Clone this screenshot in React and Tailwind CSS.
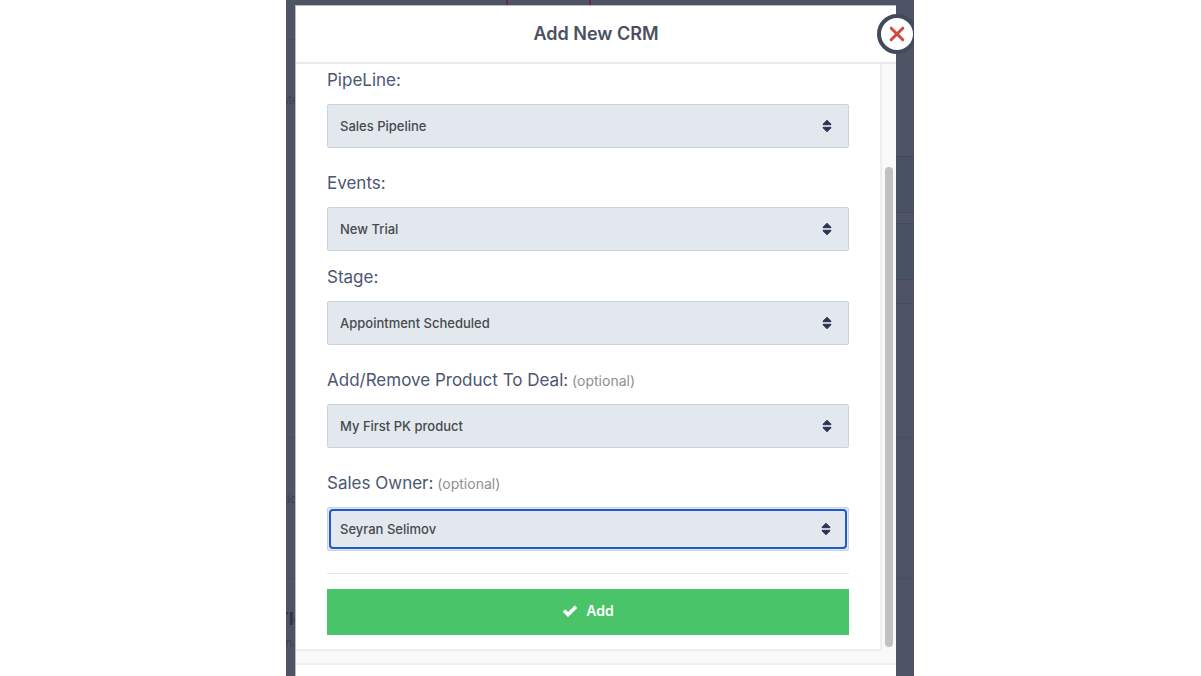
import clsx from "clsx";

const fields = [
  { id: "pipeline", label: "PipeLine:", value: "Sales Pipeline", spacing: "" },
  { id: "events", label: "Events:", value: "New Trial", spacing: "mt-[23px]" },
  { id: "stage", label: "Stage:", value: "Appointment Scheduled", spacing: "mt-[14px]" },
  {
    id: "product",
    label: "Add/Remove Product To Deal:",
    value: "My First PK product",
    optional: true,
    spacing: "mt-[23px]",
  },
  {
    id: "owner",
    label: "Sales Owner:",
    value: "Seyran Selimov",
    optional: true,
    focused: true,
    spacing: "mt-[23px]",
  },
];

const SortIcon = () => (
  <svg
    viewBox="0 0 10 14"
    className="pointer-events-none -ml-[26px] h-[14px] w-[10px] shrink-0"
    fill="#2b3556"
    stroke="#2b3556"
    strokeWidth="1"
    strokeLinejoin="round"
    aria-hidden="true"
  >
    <path d="M5 1.3 9 5.2V5.7H1V5.2Z" />
    <path d="M5 12.7 9 8.8V8.3H1V8.8Z" />
  </svg>
);

const SelectField = ({ id, label, value, optional, focused, spacing }) => (
  <div className={spacing}>
    <label htmlFor={id} className="block h-6 text-[17px] leading-6 text-[#4b5672]">
      {label}
      {optional && <span className="text-sm leading-none text-[#8f8f8f]"> (optional)</span>}
    </label>
    <div
      className={clsx(
        "mt-3 flex h-11 items-center rounded-xs border border-[#c9d3dd] bg-[#e3e8ef]",
        focused && "p-px"
      )}
    >
      <select
        id={id}
        defaultValue={value}
        className={clsx(
          "h-full w-full appearance-none bg-transparent pt-0.5 text-[13px] font-medium text-[#464a4d] outline-none",
          focused ? "rounded-sm border-2 border-[#1f5cc9] px-[9px]" : "px-3"
        )}
      >
        <option>{value}</option>
      </select>
      <SortIcon />
    </div>
  </div>
);

// Dimmed page that shows on the left of the dialog
const LeftEdge = () => (
  <div
    className="flex w-[9px] shrink-0 flex-col items-center overflow-hidden bg-[#4e5465] text-xs text-[#3a4254]"
    aria-hidden="true"
  >
    <div className="h-10 w-full border-b border-[#474e5f]" />
    <div className="flex h-[398px] w-full justify-center border-b border-[#474e5f] pt-[52px]">ste</div>
    <div className="flex h-[141px] w-full justify-center border-b border-[#474e5f] pt-[53px]">tic</div>
    <div className="pt-7 text-lg font-bold leading-6 text-[#2b3448]">Tle</div>
    <div className="pt-1">n.</div>
  </div>
);

// Dimmed page that shows on the right of the dialog
const RightEdge = () => (
  <div className="flex w-[18px] shrink-0 flex-col bg-[#4e5465]" aria-hidden="true">
    <div className="h-[156px]" />
    <div className="h-[57px] border-y border-[#414a5b] bg-[#495263]" />
    <div className="h-[10px]" />
    <div className="h-[57px] border-y border-[#414a5b] bg-[#495263]" />
    <div className="h-6 border-b border-[#454c5d]" />
    <div className="h-[134px] border-b border-[#474e5f]" />
    <div className="h-[141px] border-b border-[#474e5f]" />
  </div>
);

const App = () => {
  return (
    <div className="flex min-h-screen justify-center bg-white pr-px font-['Inter','Liberation_Sans',sans-serif]">
      <div className="flex w-full max-w-[628px] overflow-hidden">
        <LeftEdge />

        <div className="flex min-w-0 flex-1 flex-col">
          <div className="h-[5px] bg-[#4e5465] pl-[211px]">
            <div className="h-full w-[85px] border-x-2 border-[#6b2a3c]" />
          </div>

          <div
            className="relative flex-1 border-l border-t border-[#b9bac6] bg-white"
            role="dialog"
            aria-labelledby="title"
          >
            <header className="flex h-[58px] items-center justify-center border-b-2 border-[#e8eaeb]">
              <h1 id="title" className="text-lg font-semibold leading-6 text-[#4a5062]">
                Add New CRM
              </h1>
            </header>

            <button
              type="button"
              aria-label="Close"
              className="absolute -right-[21px] top-2 flex size-10 items-center justify-center rounded-full border-4 border-[#424b5c] bg-white"
            >
              <svg viewBox="0 0 16 16" className="size-4" stroke="#d1483f" strokeWidth="3" strokeLinecap="round">
                <path d="M2.2 2.2 13.8 13.8M13.8 2.2 2.2 13.8" />
              </svg>
            </button>

            <div className="flex border-b-2 border-[#efefef] bg-[#f9f9f9]">
              <form
                className="mb-3 min-w-0 flex-1 border-b-2 border-r-2 border-[#eeeeee] bg-white pb-[14px] pl-[31px] pr-[31px] pt-1"
                onSubmit={(e) => e.preventDefault()}
              >
                {fields.map((field) => (
                  <SelectField key={field.id} {...field} />
                ))}
                <hr className="mt-[22px] border-[#e6e6e6]" />
                <button
                  type="submit"
                  className="mt-[15px] flex h-[46px] w-full items-center justify-center gap-2 bg-[#49c469] pb-0.5 text-sm font-semibold text-white"
                >
                  <svg viewBox="0 0 16 12" className="h-3 w-4" fill="none" stroke="currentColor" strokeWidth="3.6">
                    <path d="M2 5.6 6 9.6 14 1.8" />
                  </svg>
                  Add
                </button>
              </form>
              <div className="w-[14px] pl-[3px] pt-[103px]">
                <div className="h-[480px] w-2 rounded-full bg-[#c1c1c1]" />
              </div>
            </div>
          </div>
        </div>

        <RightEdge />
      </div>
    </div>
  );
};

export default App;
